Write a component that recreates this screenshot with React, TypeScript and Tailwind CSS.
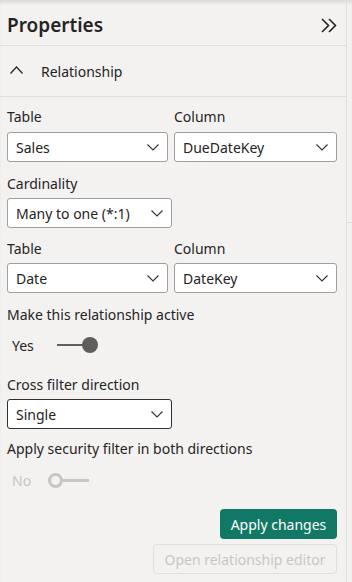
import React from "react";

function Chevron({ className = "" }: { className?: string }) {
    return (
        <svg width="12" height="7" viewBox="0 0 12 7" className={className} fill="none">
            <polyline points="0.5,0.5 6,6 11.5,0.5" stroke="#323130" strokeWidth="1.1" />
        </svg>
    );
}

function Dropdown({ value, width, dark = false }: { value: string; width: string; dark?: boolean }) {
    return (
        <div
            className={`${width} h-[30px] flex items-center justify-between pl-2 pr-[8px] bg-white rounded-[3px] border ${
                dark ? "border-[#323130]" : "border-[#a19f9d]"
            }`}
        >
            <span className="text-[14px] text-[#252423]">{value}</span>
            <Chevron />
        </div>
    );
}

function Label({ children, className = "" }: { children: React.ReactNode; className?: string }) {
    return <div className={`text-[14px] leading-[20px] text-[#252423] ${className}`}>{children}</div>;
}

export default function App() {
    return (
        <div
            className="w-[352px] h-[582px] flex bg-[#f3f2f1] shadow-[inset_0_4px_4px_-2px_rgba(0,0,0,0.12)] overflow-hidden"
            style={{ fontFamily: '"Segoe UI", "Noto Sans", sans-serif' }}
        >
            <div className="w-[346px] flex flex-col">
                {/* header */}
                <div className="h-[46px] flex items-center justify-between pl-[7px] pr-[9px] pt-[5px] border-b border-[#e1dfdd]">
                    <h1 className="text-[19px] font-semibold text-[#252423]">Properties</h1>
                    <svg width="16" height="15" viewBox="0 0 16 15" fill="none">
                        <polyline points="1,1 7.5,7.5 1,14" stroke="#252423" strokeWidth="1.6" />
                        <polyline points="8,1 14.5,7.5 8,14" stroke="#252423" strokeWidth="1.6" />
                    </svg>
                </div>

                {/* section */}
                <div className="h-[51px] flex items-center pl-[10px] pt-[1px] border-b border-[#e1dfdd]">
                    <svg width="13" height="8" viewBox="0 0 13 8" fill="none" className="mr-[18px] mb-[3px]">
                        <polyline points="0.5,7.5 6.5,1 12.5,7.5" stroke="#252423" strokeWidth="1.2" />
                    </svg>
                    <span className="text-[14px] text-[#252423]">Relationship</span>
                </div>

                <div className="flex flex-col px-[7px] pt-[10px]">
                    <div className="flex gap-[6px]">
                        <div className="flex flex-col">
                            <Label className="mb-[5px]">Table</Label>
                            <Dropdown value="Sales" width="w-[161px]" />
                        </div>
                        <div className="flex flex-col">
                            <Label className="mb-[5px]">Column</Label>
                            <Dropdown value="DueDateKey" width="w-[163px]" />
                        </div>
                    </div>

                    <Label className="mt-[12px] mb-[4px]">Cardinality</Label>
                    <Dropdown value="Many to one (*:1)" width="w-[165px]" />

                    <div className="flex gap-[6px] mt-[11px]">
                        <div className="flex flex-col">
                            <Label className="mb-[4px]">Table</Label>
                            <Dropdown value="Date" width="w-[161px]" />
                        </div>
                        <div className="flex flex-col">
                            <Label className="mb-[4px]">Column</Label>
                            <Dropdown value="DateKey" width="w-[163px]" />
                        </div>
                    </div>

                    <Label className="mt-[12px]">Make this relationship active</Label>
                    <div className="h-[24px] mt-[8px] flex items-center pl-[5px]">
                        <span className="text-[14px] text-[#252423] w-[45px]">Yes</span>
                        <div className="flex items-center">
                            <div className="w-[26px] h-[2px] bg-[#605e5c]" />
                            <div className="w-[16px] h-[16px] rounded-full bg-[#605e5c] -ml-[1px]" />
                        </div>
                    </div>

                    <Label className="mt-[18px] mb-[4px]">Cross filter direction</Label>
                    <Dropdown value="Single" width="w-[165px]" dark />

                    <Label className="mt-[10px]">Apply security filter in both directions</Label>
                    <div className="h-[24px] mt-[9px] flex items-center pl-[5px]">
                        <span className="text-[14px] text-[#c8c6c4] w-[36px]">No</span>
                        <div className="flex items-center">
                            <div className="w-[15px] h-[15px] rounded-full border-[3px] border-[#c8c6c4]" />
                            <div className="w-[26px] h-[3px] bg-[#c8c6c4]" />
                        </div>
                    </div>

                    <div className="flex flex-col items-end pr-[2px]">
                        <button className="mt-[17px] h-[30px] w-[117px] rounded-[4px] bg-[#117865] text-white text-[14px]">
                            Apply changes
                        </button>
                        <button className="mt-[5px] h-[30px] w-[184px] rounded-[4px] border border-[#e1dfdd] text-[#c8c6c4] text-[14px]">
                            Open relationship editor
                        </button>
                    </div>
                </div>
            </div>
            <div className="flex-1 border-l border-[#e1dfdd] flex flex-col">
                <div className="h-[223px] border-b border-[#e1dfdd]" />
            </div>
        </div>
    );
}
